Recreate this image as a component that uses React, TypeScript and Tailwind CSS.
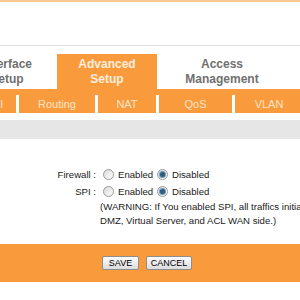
import React from 'react';

const ORANGE = 'bg-[#f99b3d]';

function Radio({ checked }: { checked?: boolean }) {
  return (
    <span className="flex h-[11px] w-[11px] shrink-0 items-center justify-center rounded-full border border-[#9a9a9a] bg-gradient-to-br from-[#d8d8d8] to-[#ffffff]">
      {checked && <span className="h-[5px] w-[5px] rounded-full bg-[#2f5d7c] ring-1 ring-[#6f9cbc]" />}
    </span>
  );
}

function RadioGroup({ label, value }: { label: string; value: 'on' | 'off' }) {
  return (
    <div className="flex items-center">
      <span className="w-[96px] text-right">{label}</span>
      <span className="ml-[7px]">
        <Radio checked={value === 'on'} />
      </span>
      <span className="ml-[4px] w-[35px]">Enabled</span>
      <span className="ml-[4px]">
        <Radio checked={value === 'off'} />
      </span>
      <span className="ml-[4px]">Disabled</span>
    </div>
  );
}

export default function App() {
  const subtabs = [
    { name: 'Firewall', w: 'w-[64px] -ml-[48px]' },
    { name: 'Routing', w: 'w-[76px]' },
    { name: 'NAT', w: 'w-[58px]' },
    { name: 'QoS', w: 'w-[73px]' },
    { name: 'VLAN', w: 'w-[68px]' },
  ];

  return (
    <div className="h-[300px] w-[300px] overflow-hidden bg-white font-['Liberation_Sans',Arial,sans-serif]">
      <div className="h-[2px] bg-[#fbc891]" />
      <div className="h-[43px]" />
      <div className="h-px bg-[#dedede]" />
      <div className="h-[8px]" />

      {/* main tabs */}
      <div className="flex h-[35px] text-[12px] font-bold leading-[15px]">
        <div className="-ml-[43px] flex w-[100px] shrink-0 flex-col items-center justify-center text-center text-[#707070]">
          <span>Interface</span>
          <span>Setup</span>
        </div>
        <div className={`flex w-[100px] shrink-0 flex-col items-center justify-center pt-[1px] text-center text-[#fdeedd] ${ORANGE}`}>
          <span>Advanced</span>
          <span>Setup</span>
        </div>
        <div className="flex w-[130px] shrink-0 flex-col items-center justify-center text-center text-[#707070]">
          <span>Access</span>
          <span>Management</span>
        </div>
      </div>

      {/* sub tabs */}
      <div className={`flex h-[24px] pt-[6px] ${ORANGE}`}>
        {subtabs.map((t, i) => (
          <React.Fragment key={t.name}>
            {i > 0 && <div className="h-[18px] w-[3px] shrink-0 bg-white" />}
            <div className={`flex h-[18px] shrink-0 items-center justify-center text-[11px] text-[#fde4c8] ${t.w}`}>
              {t.name}
            </div>
          </React.Fragment>
        ))}
      </div>

      <div className="h-[7px]" />
      <div className="h-[19px] bg-[#e6e6e6]" />

      {/* form */}
      <div className="pt-[27px] text-[9.6px] text-[#1a1a1a]">
        <div className="h-[18px]">
          <div className="flex h-full items-center">
            <RadioGroup label="Firewall :" value="off" />
          </div>
        </div>
        <div className="flex h-[16px] items-center">
          <RadioGroup label="SPI :" value="off" />
        </div>
        <div className="whitespace-nowrap pl-[100px] leading-[14px]">
          <div>(WARNING: If You enabled SPI, all traffics initiated from WAN would be blocked, including</div>
          <div>DMZ, Virtual Server, and ACL WAN side.)</div>
        </div>
      </div>

      <div className="h-[16px]" />
      <div className={`flex h-[38px] items-center justify-center gap-[7px] pr-[6px] ${ORANGE}`}>
        <button className="h-[14px] w-[37px] rounded-[2px] border border-[#8e8e8e] bg-gradient-to-b from-[#fdfdfd] to-[#dcdcdc] text-[9px] leading-[12px] text-black">
          SAVE
        </button>
        <button className="h-[14px] w-[46px] rounded-[2px] border border-[#8e8e8e] bg-gradient-to-b from-[#fdfdfd] to-[#dcdcdc] text-[9px] leading-[12px] text-black">
          CANCEL
        </button>
      </div>
    </div>
  );
}
